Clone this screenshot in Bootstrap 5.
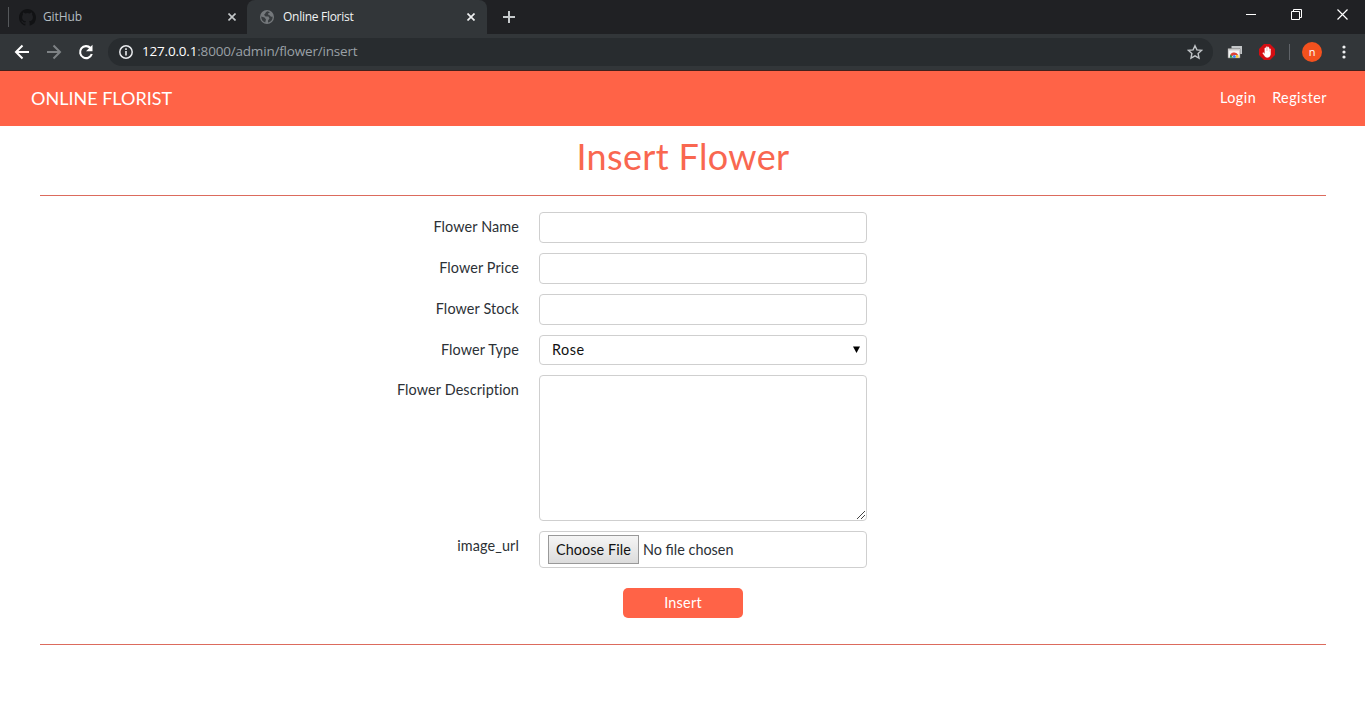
<!DOCTYPE html>
<html lang="en">
<head>
<meta charset="utf-8">
<meta name="viewport" content="width=device-width, initial-scale=1">
<title>Online Florist</title>
<link href="https://cdn.jsdelivr.net/npm/bootstrap@5.3.0/dist/css/bootstrap.min.css" rel="stylesheet">
<style>
  body { font-family: Lato, sans-serif; font-size: 14.4px; line-height: 1.6; color: #2c3136; background: #fff; height: 728px; overflow: hidden; }
  svg { display: block; flex: none; }
  /* browser frame */
  .chrome { font-family: "Open Sans", "Noto Sans", sans-serif; height: 71px; background: #323639; border-bottom: 1px solid #43201b; line-height: 1; }
  .tabstrip { height: 34px; background: #202124; }
  .tab-item { height: 34px; font-size: 12px; letter-spacing: -.28px; }
  .tab-idle { width: 239px; margin-left: 8px; color: #b4bdc1; padding: 0 11px 0 11px; position: relative; }
  .tab-idle::before { content: ""; position: absolute; left: 0; top: 7px; width: 1px; height: 20px; background: #55585b; }
  .tab-idle span { margin-left: 7px; letter-spacing: -.1px; }
  .tab-live { width: 240px; background: #323639; border-radius: 8px 8px 0 0; color: #f1f3f4; padding: 0 12px 0 12px; }
  .window-keys { padding: 9px 17px 0 0; gap: 35px; }
  .toolbar { height: 36px; padding-left: 14px; }
  .nav-icons { gap: 16px; }
  .nav-icons svg:last-child { margin-left: -1px; }
  .omnibox { width: 1105px; height: 28px; border-radius: 14px; background: #282c2f; margin-left: 13px; padding: 0 10px 0 10px; }
  .url { font-size: 13.5px; color: #9aa0a6; letter-spacing: -.19px; }
  .url b { font-weight: 400; color: #fff; }
  .extensions { margin-left: 14px; gap: 16px; }
  .avatar-dot { width: 20px; height: 20px; background: #f4511e; color: #fff; font-size: 11px; padding-bottom: 1px; margin: 0 20px 0 12px; }
  .toolsep { width: 1px; height: 16px; background: #5f6368; margin-left: 14px; }
  /* page */
  .site-nav { height: 55px; background: #ff6347; padding: 0 38px 0 31px; }
  .site-nav .navbar-brand { font-size: 18px; color: #fff; letter-spacing: 0; margin: 0; padding: 0; }
  .site-nav .nav-link { color: #fff; font-size: 14.4px; padding: 0 0 1px; letter-spacing: .45px; }
  .page { padding: 0 39px 0 40px; }
  .page-title { color: #f96750; font-size: 36px; font-weight: 400; line-height: 43px; height: 69px; padding-top: 9px; margin: 0; letter-spacing: .35px; }
  .rule { height: 1px; background: #dc6b5d; }
  .form-rows { padding-top: 16px; gap: 10px; }
  .form-row { gap: 20px; }
  .form-row > label { width: 479px; text-align: right; line-height: 23px; padding-top: 3px; letter-spacing: .12px; }
  .field { width: 328px; height: 31px; border: 1px solid #cfcfcf; border-radius: 4px; padding: 0 12px; font-size: 14.4px; color: #2c3136; background-color: #fff; }
  select.field { height: 30px; letter-spacing: .5px; color: #111; background-position: right 6px top 10px; background-size: 7px 7px;
    background-image: url("data:image/svg+xml,%3Csvg xmlns='http://www.w3.org/2000/svg' viewBox='0 0 7 7'%3E%3Cpath d='M0 .5h7L3.5 7z'/%3E%3C/svg%3E"); }
  textarea.field { height: 146px; resize: none; }
  .grip { right: 2px; bottom: 2px; }
  .file-box { height: 37px; padding: 0 8px; gap: 4px; letter-spacing: 0; }
  .file-btn { width: 91px; height: 29px; border: 1px solid #999; background: linear-gradient(#f5f5f5, #dcdcdc); color: #111; letter-spacing: .1px; }
  .btn-tomato { width: 120px; height: 30px; background: #ff6347; color: #fff; font-size: 14.4px; line-height: 28px; padding: 0; margin-top: 20px; margin-bottom: 26px; border-radius: 5px; letter-spacing: .25px; }
</style>
</head>
<body>
<div class="chrome">
  <div class="tabstrip d-flex">
    <div class="tab-item tab-idle d-flex align-items-center">
      <svg width="17" height="17" viewBox="0 0 16 16" fill="#111214"><path d="M8 0C3.580 0 0 3.580 0 8c0 3.540 2.290 6.530 5.470 7.590.4.070.55-.17.55-.38v-1.490c-2.010.37-2.530-.49-2.690-.94-.09-.23-.48-.94-.82-1.130-.28-.15-.68-.52-.01-.53.63-.01 1.080.58 1.230.82.72 1.210 1.870.87 2.330.66.070-.52.28-.87.51-1.070-1.780-.2-3.640-.89-3.640-3.950 0-.87.31-1.590.82-2.150-.08-.2-.36-1.020.08-2.120 0 0 .67-.21 2.200.82a7.600 7.600 0 0 1 4 0c1.530-1.040 2.200-.82 2.200-.82.44 1.100.16 1.920.08 2.120.51.56.82 1.270.82 2.150 0 3.070-1.870 3.750-3.650 3.950.29.25.54.73.54 1.480v2.190c0 .21.15.46.55.38A8 8 0 0 0 16 8c0-4.420-3.580-8-8-8z"/></svg>
      <span class="me-auto">GitHub</span>
      <svg width="8" height="8" viewBox="0 0 8 8" stroke="#c4c8ca" stroke-width="1.6"><path d="M.5.5l7 7M7.500.5l-7 7"/></svg>
    </div>
    <div class="tab-item tab-live d-flex align-items-center">
      <svg width="16" height="16" viewBox="0 0 16 16"><circle cx="8" cy="8" r="7" fill="#74787b"/><path d="M8.500 2.300C5.500 3.500 7 5 5 5.700L6.500 7.500H9.500L10.500 9.500L9 11.500V13.500C12 13 14 10.500 13.500 7.500C11 8.500 11.500 6 9.500 6L9 4.500L11 3.200ZM2.200 7.500L5.500 8.500L7 10.500L6.200 13.500C3.500 12.500 2.200 10.500 2.200 7.500Z" fill="#393d40"/></svg>
      <span class="ms-2 me-auto">Online Florist</span>
      <svg width="8" height="8" viewBox="0 0 8 8" stroke="#eef0f1" stroke-width="1.7"><path d="M.5.5l7 7M7.500.5l-7 7"/></svg>
    </div>
    <svg class="align-self-center ms-3" width="12" height="12" viewBox="0 0 12 12" stroke="#c6cacc" stroke-width="2"><path d="M6 0v12M0 6h12"/></svg>
    <div class="window-keys ms-auto d-flex">
      <svg width="10" height="11" viewBox="0 0 10 11" stroke="#fff"><path d="M0 5.500h10"/></svg>
      <svg width="11" height="11" viewBox="0 0 11 11" fill="none" stroke="#fff"><path d="M.5 2.500h8v8h-8zM2.500 2.500v-2h8v8h-2"/></svg>
      <svg width="11" height="11" viewBox="0 0 11 11" stroke="#fff" stroke-width="1.2"><path d="M.5.5l10 10M10.500.5l-10 10"/></svg>
    </div>
  </div>
  <div class="toolbar d-flex align-items-center">
    <div class="nav-icons d-flex">
      <svg width="16" height="16" viewBox="0 0 16 16" fill="none" stroke="#fff" stroke-width="2"><path d="M15 8H2M8.500 1.500L2 8l6.500 6.500"/></svg>
      <svg width="16" height="16" viewBox="0 0 16 16" fill="none" stroke="#7e8285" stroke-width="2"><path d="M1 8h13M7.500 1.500L14 8l-6.500 6.500"/></svg>
      <svg width="18" height="16" viewBox="0 0 18 16"><path d="M13.500 4A6 6 0 1 0 14.800 10" fill="none" stroke="#fff" stroke-width="2.100"/><path d="M15.500.8v6.500H9z" fill="#fff"/></svg>
    </div>
    <div class="omnibox d-flex align-items-center">
      <svg width="16" height="16" viewBox="0 0 16 16"><circle cx="8" cy="8" r="6.200" fill="none" stroke="#e8eaed" stroke-width="1.500"/><path d="M7.200 7h1.600v4.500H7.200zM7.200 4.300h1.600v1.600H7.200z" fill="#e8eaed"/></svg>
      <span class="url ms-2"><b>127.0.0.1</b>:8000/admin/flower/insert</span>
      <svg class="ms-auto" width="16" height="16" viewBox="0 0 16 16" fill="none" stroke="#c0c4c7" stroke-width="1.400"><path d="M8 1.700l1.900 4.200 4.600.5-3.400 3.100.9 4.600L8 11.800l-4 2.300.9-4.600L1.500 6.400l4.600-.5z"/></svg>
    </div>
    <div class="extensions d-flex">
      <svg width="16" height="16" viewBox="0 0 16 16"><path d="M4.500 2H15v8H4.500z" fill="#c3c6c8"/><path d="M1 4.500h12V14H1z" fill="#f4f4f4" stroke="#777" stroke-width=".6"/><path d="M1.500 5h11v1.500h-11z" fill="#c8c8c8"/><path d="M3 13a4.300 4.300 0 0 1 8.200-2L7.300 11z" fill="#dc4437"/><path d="M2.900 13.700a4 4 0 0 1 .8-3.200l2.300 3.200z" fill="#249b50"/><path d="M8.500 13.700L9 11h2.300q.5 1.200.2 2.700z" fill="#f5c934"/><circle cx="7.300" cy="12.400" r="1.500" fill="#4285f4"/></svg>
      <svg width="16" height="16" viewBox="0 0 16 16"><path d="M5 0h6l5 5v6l-5 5H5l-5-5V5z" fill="#d50d12"/><path d="M4.300 8.500L5.800 10V4.200q.7-.8 1.200 0V7h.3V2.900q.7-.8 1.200 0V7h.3V3.500q.7-.8 1.200 0v4h.3V5q.7-.8 1.200 0v5.500Q11 13.500 8.200 13.500 6.300 13.500 5.300 11.500L3.700 9z" fill="#fff" stroke="#fff" stroke-width=".4"/></svg>
    </div>
    <div class="toolsep"></div>
    <div class="avatar-dot rounded-circle d-flex align-items-center justify-content-center">n</div>
    <svg width="4" height="14" viewBox="0 0 4 14" fill="#eef0f1"><circle cx="2" cy="2" r="1.600"/><circle cx="2" cy="7" r="1.600"/><circle cx="2" cy="12" r="1.600"/></svg>
  </div>
</div>

<nav class="navbar site-nav d-flex align-items-center justify-content-between">
  <a class="navbar-brand" href="#">ONLINE FLORIST</a>
  <div class="d-flex gap-3">
    <a class="nav-link" href="#">Login</a>
    <a class="nav-link" href="#">Register</a>
  </div>
</nav>

<main class="page">
  <h1 class="page-title text-center">Insert Flower</h1>
  <div class="rule"></div>
  <form class="form-rows d-flex flex-column">
    <div class="form-row d-flex"><label for="fname">Flower Name</label><input id="fname" class="form-control field"></div>
    <div class="form-row d-flex"><label for="fprice">Flower Price</label><input id="fprice" class="form-control field"></div>
    <div class="form-row d-flex"><label for="fstock">Flower Stock</label><input id="fstock" class="form-control field"></div>
    <div class="form-row d-flex"><label for="ftype">Flower Type</label><select id="ftype" class="form-select field"><option>Rose</option></select></div>
    <div class="form-row d-flex"><label for="fdesc">Flower Description</label>
      <div class="position-relative"><textarea id="fdesc" class="form-control field d-block"></textarea>
        <svg class="grip position-absolute" width="8" height="8" viewBox="0 0 8 8" stroke="#444" stroke-width="1"><path d="M0 8L8 0M4 8l4-4"/></svg></div></div>
    <div class="form-row d-flex"><label>image_url</label>
      <div class="field file-box d-flex align-items-center"><span class="file-btn d-flex align-items-center justify-content-center">Choose File</span><span>No file chosen</span></div></div>
  </form>
  <div class="d-flex justify-content-center"><button type="button" class="btn btn-tomato">Insert</button></div>
  <div class="rule"></div>
</main>
<script src="https://cdn.jsdelivr.net/npm/bootstrap@5.3.0/dist/js/bootstrap.bundle.min.js"></script>
</body>
</html>
